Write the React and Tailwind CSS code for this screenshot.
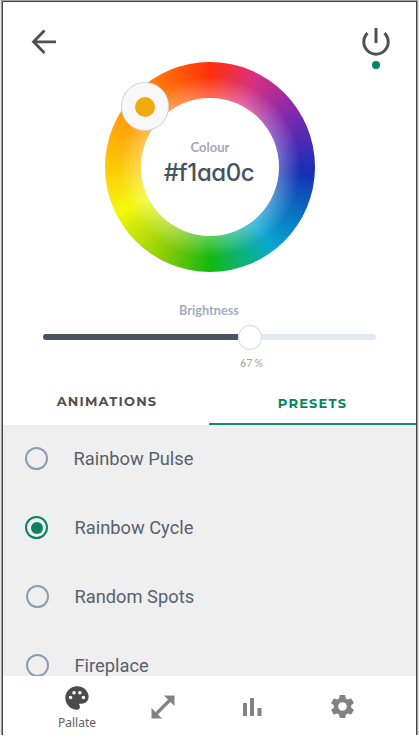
import { MdPalette, MdSettings } from "react-icons/md";

const presets = [
  { name: "Rainbow Pulse", nudge: "ml-[22px]", text: "ml-[25.5px]" },
  { name: "Rainbow Cycle", nudge: "ml-[22px]", text: "ml-[26.5px]", selected: true },
  { name: "Random Spots", nudge: "ml-[23px]", text: "ml-[25.5px]" },
  { name: "Fireplace", nudge: "ml-[23px]", text: "ml-[25.5px]" },
];

function ColourWheel() {
  return (
    <div className="relative mx-auto h-[210px] w-[210px] rounded-full bg-[conic-gradient(#ff300c_0deg,#d83080_27deg,#8c2aaa_53deg,#4a2ab4_75deg,#1430b4_94deg,#0c6cc0_116deg,#0aa6d0_142deg,#0cb468_164deg,#14b810_180deg,#8ccc08_208deg,#f4f80c_244deg,#ffb808_280deg,#ff9208_310deg,#ff7408_330deg,#ff300c_360deg)]">
      <div className="h-full w-full rounded-full bg-[radial-gradient(circle,rgba(255,255,255,0.3)_69px,rgba(255,255,255,0)_90px)] p-9">
        <div className="flex h-full w-full flex-col items-center rounded-full bg-white pt-[41px]">
          <div className="font-['Lato',sans-serif] text-[13px] font-bold leading-4 text-[#a0a9b3]">Colour</div>
          <div className="mt-[2px] whitespace-nowrap pr-[2px] font-['Inter',sans-serif] text-[24px] font-medium leading-8 tracking-[-0.4px] text-[#485361] [font-feature-settings:'cv11']">#f1aa0c</div>
        </div>
      </div>
      <div className="absolute left-[15.5px] top-5 flex h-[49px] w-12 items-center justify-center rounded-full border border-[#d2d2d4] bg-[#f8f8f8]">
        <div className="h-5 w-5 rounded-full bg-[#f1aa0c]" />
      </div>
    </div>
  );
}

export default function App() {
  return (
    <div className="h-[738px] w-[419px] overflow-hidden bg-white">
      <div className="h-[735px] border-x border-[#e6e6e6]">
        <div className="h-full border-x border-t border-[#a0a0a0]">
          <div className="flex h-[734px] flex-col overflow-hidden border-x border-t border-[#454545] bg-white">
            <header className="flex h-[60px] shrink-0 justify-between pl-[28px] pr-[26px]">
              <svg className="mt-[27px] h-[26px] w-[26px]" viewBox="0 0 26 26" fill="none" stroke="#4f4f4f" strokeWidth="2.8">
                <path d="M25 12.8H2.5M13.5 1.5 2.5 12.8 13.5 24" />
              </svg>
              <div className="flex w-7 flex-col items-center pt-[25px]">
                <svg className="h-[29px] w-7 shrink-0" viewBox="0 0 28 29" fill="none" stroke="#505050" strokeWidth="3">
                  <path d="M14 1v15M5.5 6.2A12.2 12.2 0 1 0 22.5 6.2" />
                </svg>
                <div className="mt-[5px] h-2 w-2 shrink-0 rounded-full bg-[#078363]" />
              </div>
            </header>
            <section className="h-[210px] shrink-0 pl-px">
              <ColourWheel />
            </section>
            <section className="h-[108px] shrink-0 pl-[40px] pr-10 pt-[29px] font-['Lato',sans-serif]">
              <div className="pr-px text-center text-[12.7px] font-bold leading-[18px] text-[#a5adb8]">Brightness</div>
              <div className="mt-[6px] flex h-6 items-center">
                <div className="h-[6px] w-[195px] rounded-l-sm bg-[#495462]" />
                <div className="h-[25px] w-6 shrink-0 rounded-full border border-[#d3d5df] bg-white" />
                <div className="h-[6px] flex-1 rounded-r-sm bg-[#e4e8f1]" />
              </div>
              <div className="ml-[197px] mt-[5px] text-[10.5px] leading-[18px] tracking-[-0.6px] text-[#a3a3a3]"><span className="tracking-[0.1px]">67</span> %</div>
            </section>
            <nav className="flex h-[45px] shrink-0 text-center font-['Montserrat','Inter',sans-serif] text-[13px] font-bold">
              <div className="w-[206px] pl-[2px] pt-[11px] leading-5 tracking-[1.2px] text-[#505050]">ANIMATIONS</div>
              <div className="flex-1 border-b-2 border-[#168b6c] pt-[12.5px] leading-5 tracking-[1.2px] text-[#078363]">PRESETS</div>
            </nav>
            <main className="h-[251px] shrink-0 overflow-hidden bg-[#efefef]">
              <div className="-mt-px">
                {presets.map((p) => (
                  <div key={p.name} className="flex h-[69px] items-center">
                    <div className={`${p.nudge} flex h-[23px] w-[23px] items-center justify-center rounded-full border-2 ${p.selected ? "border-[#078363]" : "border-[#8d9cb3]"}`}>
                      {p.selected && <div className="h-3 w-3 rounded-full bg-[#078363]" />}
                    </div>
                    <div className={`${p.text} font-['Roboto',sans-serif] text-[18.3px] text-[#57616d]`}>{p.name}</div>
                  </div>
                ))}
              </div>
            </main>
            <footer className="flex flex-1 text-[#828282]">
              <div className="ml-[44px] flex w-[60px] flex-col items-center pt-2">
                <MdPalette size={28} color="#4b4b4b" />
                <div className="mt-[2px] font-['Noto_Sans',sans-serif] text-[12px] leading-[18px] text-[#606060]">Pallate</div>
              </div>
              <svg className="ml-[44px] mt-[19px] h-6 w-6" viewBox="0 0 24 24" fill="currentColor">
                <path d="M13 0.5h10.5V11zM0.5 13v10.5H11z" />
                <path d="M4 20 20 4" stroke="currentColor" strokeWidth="3.2" />
              </svg>
              <svg className="ml-[68px] mt-[22px] h-[18px] w-[19px]" viewBox="0 0 19 18" fill="currentColor">
                <path d="M0 5h4v13H0zM7 0h4v18H7zM14.5 10h4v8h-4z" />
              </svg>
              <MdSettings className="ml-[66px] mt-[16px]" size={29} />
            </footer>
          </div>
        </div>
      </div>
    </div>
  );
}
